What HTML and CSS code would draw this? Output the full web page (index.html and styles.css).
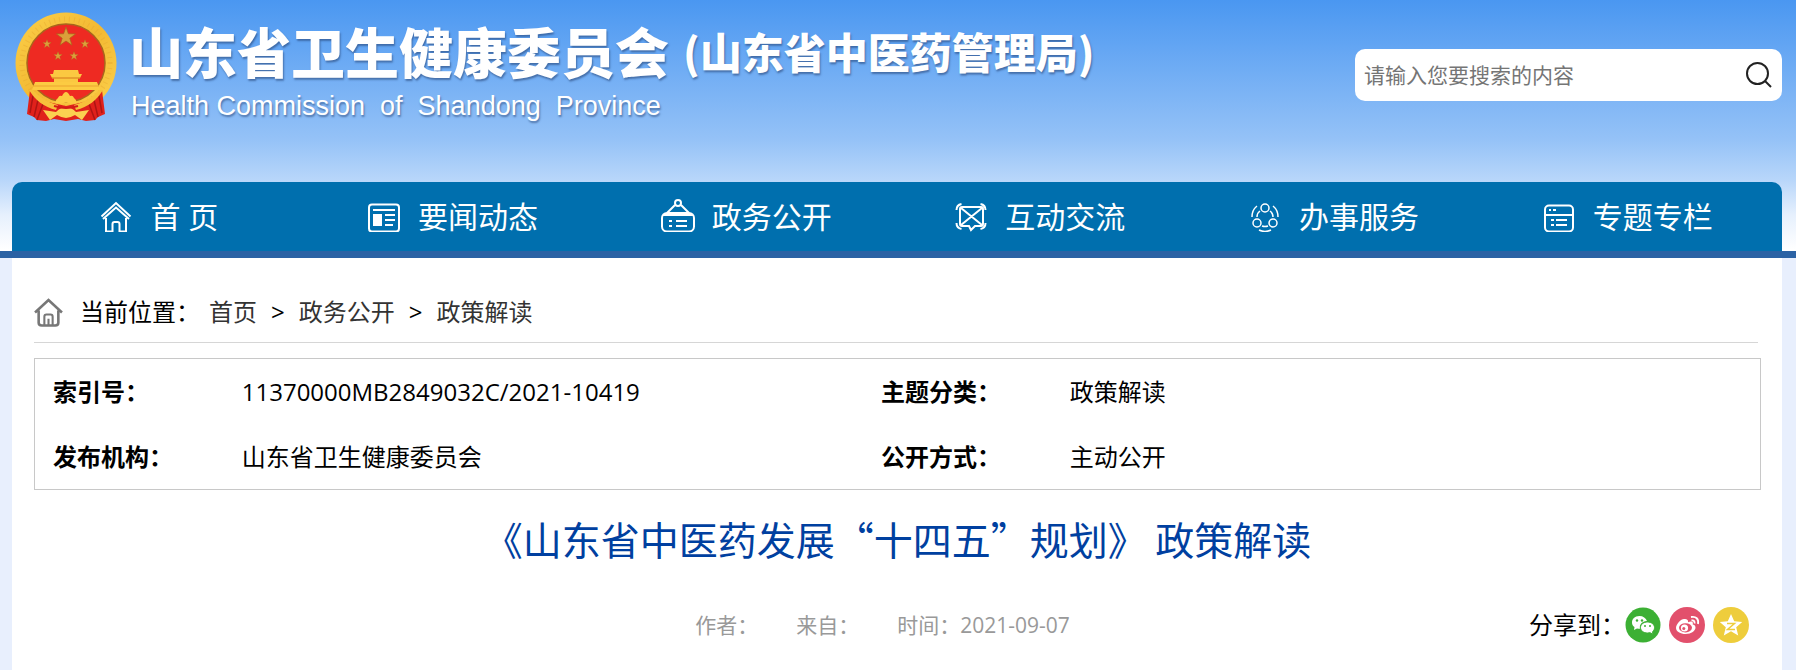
FILE: index.html
```html
<!DOCTYPE html>
<html lang="zh-CN">
<head>
    <meta charset="UTF-8">
    <meta name="viewport" content="width=device-width, initial-scale=1.0">
    <title>《山东省中医药发展“十四五”规划》 政策解读</title>
    <link rel="stylesheet" href="styles.css">
</head>
<body>
    <header class="header">
        <div class="top">
            <a class="logo" href="#">
                <svg class="emblem" viewBox="0 0 102 110" aria-hidden="true">
                    <defs>
                        <linearGradient id="gold" x1="0" y1="0" x2="1" y2="1">
                            <stop offset="0" stop-color="#fbd04a"/>
                            <stop offset="0.5" stop-color="#f3b932"/>
                            <stop offset="1" stop-color="#fcd24e"/>
                        </linearGradient>
                        <path id="star" d="M0-10 2.4-3.2 9.5-3.1 3.8 1.2 5.9 8.1 0 4-5.9 8.1-3.8 1.2-9.5-3.1-2.4-3.2Z"/>
                    </defs>
                    <!-- wreath and red field -->
                    <circle cx="51" cy="51" r="50.500" fill="url(#gold)"/>
                    <circle cx="51" cy="51" r="44" fill="none" stroke="#e5a42c" stroke-width="5" stroke-dasharray="1 4" opacity="0.4"/>
                    <circle cx="51" cy="51" r="39" fill="#ee2a22" stroke="#a8651c" stroke-width="1.500"/>
                    <g fill="#dba03a" stroke="#a9641d" stroke-width="0.700">
                        <use href="#star" transform="translate(51 25)"/>
                        <use href="#star" transform="translate(32 32) scale(0.45)"/>
                        <use href="#star" transform="translate(70 32) scale(0.45)"/>
                        <use href="#star" transform="translate(43 44) scale(0.45)"/>
                        <use href="#star" transform="translate(59 44) scale(0.45)"/>
                    </g>
                    <!-- gate -->
                    <path d="M39 58h24l1 4h3l-2 4h-2v4H39v-4h-2l-2-4h3z" fill="#fbc841"/>
                    <path d="M37 66h28" stroke="#e09328" stroke-width="1.500"/>
                    <path d="M20 70h62l3 8H17z" fill="#fccb42"/>
                    <path d="M18 74h66" stroke="#eba52f" stroke-width="1"/>
                    <!-- ribbons -->
                    <path d="M15 78c6 5 11 9 18 12l18 4 18-4c7-3 12-7 18-12l3 24-7 3-3 3-9 1-8-2-12 2-12-2-8 2-9-1-3-3-7-3z" fill="#e0211b"/>
                    <path d="M18 84l-3 17M23 88l-4 17M28 92l-6 16M84 84l3 17M79 88l4 17M74 92l6 16" stroke="#ad1513" stroke-width="1.500"/>
                    <path d="M18 78c6 7 14 12 25 15l-2 5C29 95 20 88 14 78zM84 78c-6 7-14 12-25 15l2 5c12-3 21-10 27-20z" fill="#f7c03b"/>
                    <path d="M40 91q1-4 3-5 1-3 4-2 2-4 4-4t4 4q3-1 4 2 2 1 3 5l-6 1q-5-3-10 0z" fill="#fccb42"/>
                    <path d="M28 98l13 2q5-5 10-5t10 5l13-2-7 10-7-5q-5 3-9 3t-9-3l-7 5z" fill="#fbd050"/>
                    <path d="M39 94q7 2 12 2t12-2" fill="none" stroke="#d41c18" stroke-width="2"/>
                </svg>
                <span class="names">
                    <span class="name-row">
                        <span class="name">山东省卫生健康委员会</span>
                        <span class="bureau">(山东省中医药管理局)</span>
                    </span>
                    <span class="english">Health Commission &nbsp;of &nbsp;Shandong &nbsp;Province</span>
                </span>
            </a>
            <form class="search">
                <input type="text" aria-label="搜索" placeholder="请输入您要搜索的内容">
                <button type="submit" aria-label="搜索">
                    <svg width="26" height="26" viewBox="0 0 26 26" fill="none" stroke="#222" stroke-width="2"><circle cx="11.500" cy="11.500" r="10.500"/><path d="M19 19l6 6"/></svg>
                </button>
            </form>
        </div>
        <nav class="nav">
            <a href="#">
                <svg viewBox="0 0 34 34"><path d="M2.500 18.500 17 5 31.500 18.500M4 21 17 9.500 30 21M7 20v13.500h6.500V26q0-2 2-2h3q2 0 2 2v7.500H27V20"/></svg>
                <span>首 页</span>
            </a>
            <a href="#">
                <svg viewBox="0 0 34 34"><rect x="2" y="6.500" width="30" height="27" rx="3"/><rect x="6" y="16" width="9" height="12" fill="#fff" stroke="none"/><path d="M6 12h22M18 17h10M18 22h10M18 27h8"/></svg>
                <span>要闻动态</span>
            </a>
            <a href="#">
                <svg viewBox="0 0 34 34"><rect x="1" y="15" width="32" height="18.500" rx="5"/><circle cx="17" cy="5" r="3"/><path d="M14 7 6 15M20 7l8 8M2 17h30M8 23h3M15 23h11M8 28h3M15 28h11"/></svg>
                <span>政务公开</span>
            </a>
            <a href="#">
                <svg viewBox="0 0 34 34"><path d="M8 9h19q2 0 2 2v15q0 2-2 2h-6l-4 4-2-4H8q-2 0-2-2V11q0-2 2-2zM7 10l21 17M28 10 7 27M2.500 12q0-5 5-6M31.500 12q0-5-5-6M2.500 25q0 5 5 6M31.500 25q0 5-5 6"/></svg>
                <span>互动交流</span>
            </a>
            <a href="#">
                <svg class="thin" viewBox="0 0 34 34"><circle cx="17" cy="10" r="4"/><circle cx="9" cy="25" r="4"/><circle cx="25" cy="25" r="4"/><path d="M9 8q-5 4-5 11M25 8q5 4 5 11M12 13q-3 2-3 6M22 13q3 2 3 6M11 32q6 3 12 0M14 28q3 1 6 0"/></svg>
                <span>办事服务</span>
            </a>
            <a href="#">
                <svg viewBox="0 0 34 34"><rect x="3" y="7.500" width="28" height="26" rx="4"/><path d="M3 17h28M7 12h2M11 12h3M9 22h3M14 22h11M9 27h3M14 27h11"/></svg>
                <span>专题专栏</span>
            </a>
        </nav>
    </header>

    <main class="content">
        <div class="location">
            <svg viewBox="0 0 28 28" aria-hidden="true"><path d="M1 14 14 2l13 12M4.500 12v12q0 2.500 3 2.500h13q3 0 3-2.500V12" fill="none" stroke="#777" stroke-width="2.500"/><path d="M10 26v-8q0-2 2-2h4q2 0 2 2v8M14 20v6" fill="none" stroke="#777" stroke-width="2"/></svg>
            <span class="here">当前位置：</span>
            <a href="#">首页</a>
            <span class="sep">&gt;</span>
            <a href="#">政务公开</a>
            <span class="sep">&gt;</span>
            <a href="#">政策解读</a>
        </div>

        <table class="info">
            <tr>
                <th scope="row">索引号：</th>
                <td class="wide">11370000MB2849032C/2021-10419</td>
                <th scope="row">主题分类：</th>
                <td>政策解读</td>
            </tr>
            <tr>
                <th scope="row">发布机构：</th>
                <td>山东省卫生健康委员会</td>
                <th scope="row">公开方式：</th>
                <td>主动公开</td>
            </tr>
        </table>

        <h1 class="title">《山东省中医药发展“十四五”规划》 政策解读</h1>

        <div class="meta">
            <div class="source">
                <span>作者：</span>
                <span>来自：</span>
                <span>时间：2021-09-07</span>
            </div>
            <div class="share">
                <span>分享到：</span>
                <div class="share-links">
                    <a href="#" aria-label="微信">
                        <svg viewBox="0 0 36 36"><circle cx="18" cy="18" r="17.500" fill="#3cb034"/><path d="M14.500 9C9.500 9 7 12 7 15.500c0 2 1 3.500 2.500 4.500L9 23l3-1.500c1 .3 2 .3 3 .3C14 17 18 14 22 14 21 11 18 9 14.500 9z" fill="#fff"/><path d="M22.500 15c-4 0-7 2.500-7 5.500s3 5.500 7 5.500l2.500-.3 3 1.500-.5-2.500c1.500-1 2-2.500 2-4.200 0-3-3-5.500-7-5.500z" fill="#fff" stroke="#3cb034"/><g fill="#3cb034"><circle cx="12" cy="13.500" r="1.200"/><circle cx="17" cy="13.500" r="1.200"/><circle cx="20" cy="19" r="1"/><circle cx="25" cy="19" r="1"/></g></svg>
                    </a>
                    <a href="#" aria-label="微博">
                        <svg viewBox="0 0 36 36"><circle cx="18" cy="18" r="18" fill="#e2506c"/><path d="M15 12c-3 0-8 5-8 9 0 3.500 4.500 6 9.500 6 6 0 10-3.500 10-6.500 0-2-1.500-2.700-2.800-3 .8-2.500-.7-4-4.700-2.300.5-1.800-.5-3.200-4-3.200z" fill="#fff"/><ellipse cx="16.500" cy="20.800" rx="6.500" ry="4.600" fill="#e2506c"/><circle cx="15.500" cy="21" r="3.600" fill="#fff"/><circle cx="14.800" cy="21.500" r="1.500" fill="#e2506c"/><path d="M22 10c5-1 8 2 7 7M22.500 13.500c2.500-.5 3.500 1 3 3" fill="none" stroke="#fff" stroke-width="1.800"/></svg>
                    </a>
                    <a href="#" aria-label="QQ空间">
                        <svg viewBox="0 0 36 36"><circle cx="18" cy="18" r="18" fill="#eecd3c"/><path d="M18 7l3.200 7.200 8 .8-6 5.300 2 8.200-7.200-4.200-7.200 4.200 2-8.200-6-5.300 8-.8z" fill="#fff"/><path d="M14 16.500h7.500l-7 6H22" fill="none" stroke="#eecd3c" stroke-width="1.500"/></svg>
                    </a>
                </div>
            </div>
        </div>
    </main>
</body>
</html>
```
FILE: styles.css
```css
* {
    box-sizing: border-box;
}

body {
    margin: 0;
    min-height: 100vh;
    display: flex;
    flex-direction: column;
    background-color: #e8effd;
    color: #000;
    font-family: "Open Sans", "Noto Sans CJK SC", sans-serif;
    font-size: 24px;
    line-height: 32px;
}

a {
    color: inherit;
    text-decoration: none;
}

.header {
    padding: 0 14px 0 12px;
    background: linear-gradient(#4a97f1 0, #95c2f7 140px, #b8d6fa 180px, #e6f0fd 215px, #fff 250px);
    border-bottom: 7px solid #2b62a4;
}

.top {
    display: flex;
    justify-content: space-between;
    align-items: flex-start;
    height: 182px;
}

.logo {
    display: flex;
    gap: 12px;
    padding: 12px 0 0 3px;
    color: #fff;
    text-shadow: 1px 2px 2px rgba(40, 70, 120, 0.6);
}

.emblem {
    width: 102px;
    height: 110px;
}

.names {
    display: flex;
    flex-direction: column;
    gap: 2px;
    padding-top: 2px;
}

.name-row {
    display: flex;
    align-items: center;
    gap: 14px;
    height: 74px;
    font-family: "Noto Sans CJK SC", sans-serif;
    font-weight: 900;
    white-space: nowrap;
}

.name {
    font-size: 54px;
    line-height: 72px;
}

.bureau {
    font-size: 42px;
    line-height: 72px;
}

.english {
    padding-left: 2px;
    font-family: "Liberation Sans", Arial, sans-serif;
    font-size: 27px;
    line-height: 32px;
}

.search {
    display: flex;
    width: 427px;
    height: 52px;
    margin-top: 49px;
    background-color: #fff;
    border-radius: 10px;
}

.search input {
    flex: 1;
    min-width: 0;
    padding: 0 0 0 9px;
    border: none;
    outline: none;
    background: none;
    font-family: inherit;
    font-size: 21px;
}

.search input::placeholder {
    color: #757575;
}

.search button {
    display: flex;
    align-items: center;
    padding: 0 10px;
    border: none;
    background: none;
    cursor: pointer;
}

.nav {
    display: flex;
    height: 69px;
    padding-right: 8px;
    background-color: #006fae;
    border-radius: 10px 10px 0 0;
    color: #fff;
    font-size: 30px;
    line-height: 69px;
}

.nav a {
    flex: 1;
    display: flex;
    justify-content: center;
    align-items: center;
    gap: 17px;
    white-space: nowrap;
}

.nav svg {
    width: 34px;
    height: 34px;
    margin-bottom: 4px;
    fill: none;
    stroke: #fff;
    stroke-width: 2;
}

.nav .thin {
    stroke-width: 1.5;
}

.content {
    flex: 1;
    margin: 0 14px 0 12px;
    padding: 0 21px 0 22px;
    background-color: #fff;
}

.location {
    display: flex;
    align-items: center;
    height: 85px;
    margin-right: 3px;
    padding-top: 24px;
    border-bottom: 1px solid #d6d6d6;
    color: #333;
}

.location svg {
    width: 29px;
    height: 29px;
    margin-right: 17px;
}

.location .here {
    margin-right: 9px;
    color: #000;
}

.location .sep {
    margin: 0 14px;
    color: #000;
}

.info {
    width: 100%;
    margin-top: 15px;
    border: 1px solid #c8c8c8;
    border-spacing: 0;
    table-layout: fixed;
}

.info th,
.info td {
    height: 65px;
    padding: 0;
    text-align: left;
}

.info th {
    width: 11%;
    padding-left: 18px;
    white-space: nowrap;
}

.info td {
    padding-left: 17px;
}

.info .wide {
    width: 37%;
}

.title {
    margin: 20px 0 0;
    color: #0040a0;
    font-family: "Noto Sans CJK SC", sans-serif;
    font-size: 39px;
    font-weight: 400;
    line-height: 56px;
    text-align: center;
}

.meta {
    display: grid;
    grid-template-columns: 1fr auto 1fr;
    align-items: center;
    margin-top: 41px;
}

.source {
    grid-column: 2;
    display: flex;
    gap: 38px;
    margin-right: 30px;
    color: #999;
    font-size: 21px;
}

.share {
    justify-self: end;
    display: flex;
    align-items: center;
    margin-right: 12px;
}

.share-links {
    display: flex;
    gap: 8px;
}

.share a {
    display: flex;
}

.share svg {
    width: 36px;
    height: 36px;
}
```
